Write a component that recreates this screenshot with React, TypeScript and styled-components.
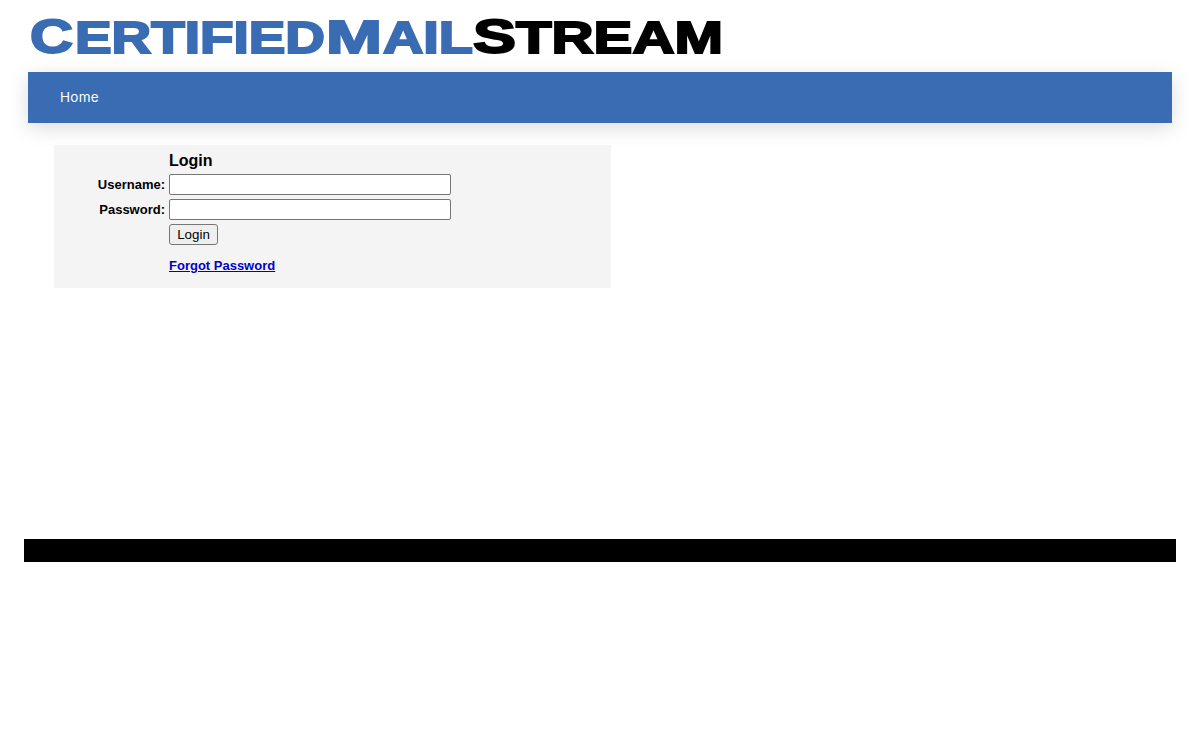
import React from 'react';
import styled, { createGlobalStyle } from 'styled-components';

const GlobalStyle = createGlobalStyle`
  html, body {
    margin: 0;
    padding: 0;
    background: #fff;
    font-family: "Liberation Sans", Arial, sans-serif;
  }
`;

const Page = styled.div`
  padding: 0 24px;
  height: 740px;
  box-sizing: border-box;
  overflow: hidden;
`;

const LogoRow = styled.header`
  height: 72px;
  padding-left: 4px;
`;

const LogoSvg = styled.svg`
  display: block;
  width: 720px;
  height: 72px;
`;

const LogoText = styled.text<{ $dark?: boolean }>`
  font-family: "Liberation Sans", Arial, sans-serif;
  font-weight: 700;
  fill: ${({ $dark }) => ($dark ? '#000' : '#396cb3')};
  stroke: ${({ $dark }) => ($dark ? '#000' : '#396cb3')};
  stroke-width: 2px;
`;

const NavBar = styled.nav`
  margin: 0 4px;
  height: 51px;
  background: #396cb3;
  display: flex;
  align-items: center;
  padding-left: 32px;
  padding-bottom: 2px;
  box-sizing: border-box;
  box-shadow: 0 5px 20px rgba(0, 0, 0, 0.14);
`;

const NavLink = styled.a`
  font-family: Inter, "Open Sans", sans-serif;
  font-weight: 400;
  font-size: 13.5px;
  letter-spacing: 0.3px;
  color: #fff;
`;

const LoginPanel = styled.form`
  margin: 22px 0 0 30px;
  width: 557px;
  height: 143px;
  box-sizing: border-box;
  background: #f4f4f4;
  display: grid;
  grid-template-columns: 111px 1fr;
  grid-auto-rows: min-content;
  column-gap: 4px;
  row-gap: 4px;
  padding-top: 6px;
  align-items: center;
`;

const Title = styled.h2`
  grid-column: 2;
  margin: 0;
  font-size: 16px;
  line-height: 19px;
  font-weight: 700;
  color: #000;
`;

const Label = styled.label`
  text-align: right;
  font-size: 13px;
  font-weight: 700;
  color: #000;
`;

const TextInput = styled.input`
  width: 282px;
  height: 21px;
  box-sizing: border-box;
  border: 1px solid #767676;
  border-radius: 2px;
  background: #fff;
  padding: 1px 2px;
`;

const LoginButton = styled.button`
  grid-column: 2;
  width: 49px;
  height: 21px;
  padding: 0;
  box-sizing: border-box;
  border: 1px solid #767676;
  border-radius: 3px;
  background: #efefef;
  font-family: "Liberation Sans", Arial, sans-serif;
  font-size: 13.33px;
  color: #000;
`;

const ForgotLink = styled.a`
  grid-column: 2;
  margin-top: 9px;
  font-size: 13px;
  font-weight: 700;
  color: #0000cc;
  text-decoration: underline;
`;

const FooterBar = styled.footer`
  margin-top: 251px;
  height: 23px;
  background: #000;
`;

const App = () => {
  return (
    <Page>
      <GlobalStyle />
      <LogoRow>
        <LogoSvg viewBox="0 0 720 72">
          <LogoText x="2" y="53.4" fontSize="48" textLength="43" lengthAdjust="spacingAndGlyphs">C</LogoText>
          <LogoText x="47" y="53" fontSize="45" textLength="250" lengthAdjust="spacingAndGlyphs">ERTIFIED</LogoText>
          <LogoText x="298" y="53" fontSize="47" textLength="56" lengthAdjust="spacingAndGlyphs">M</LogoText>
          <LogoText x="355" y="53" fontSize="45" textLength="90" lengthAdjust="spacingAndGlyphs">AIL</LogoText>
          <LogoText $dark x="445" y="53.4" fontSize="48" textLength="43" lengthAdjust="spacingAndGlyphs">S</LogoText>
          <LogoText $dark x="488" y="53" fontSize="45" textLength="207" lengthAdjust="spacingAndGlyphs">TREAM</LogoText>
        </LogoSvg>
      </LogoRow>
      <NavBar>
        <NavLink>Home</NavLink>
      </NavBar>
      <LoginPanel>
        <Title>Login</Title>
        <Label>Username:</Label>
        <TextInput type="text" />
        <Label>Password:</Label>
        <TextInput type="password" />
        <LoginButton type="button">Login</LoginButton>
        <ForgotLink href="#">Forgot Password</ForgotLink>
      </LoginPanel>
      <FooterBar />
    </Page>
  );
};

export default App;
